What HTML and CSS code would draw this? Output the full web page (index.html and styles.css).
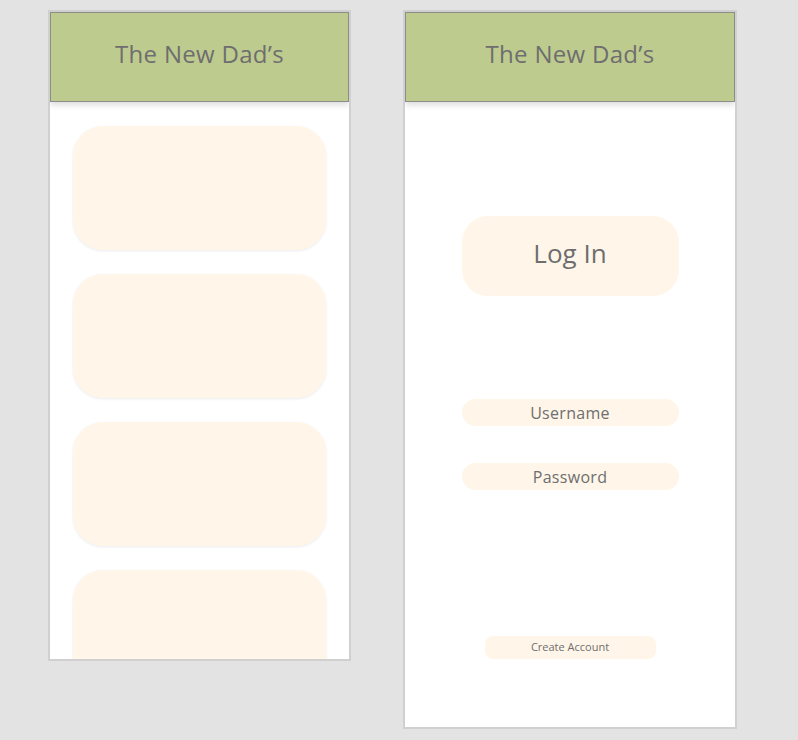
FILE: index.html
```html
<!DOCTYPE html>
<html>
<head>
<meta charset="utf-8">
<link rel="stylesheet" href="styles.css">
</head>
<body>
<div class="stage">
  <div class="phone phone-feed">
    <header class="bar"><span class="bar-title">The New Dad’s</span></header>
    <div class="feed">
      <div class="card"></div>
      <div class="card"></div>
      <div class="card"></div>
      <div class="card"></div>
    </div>
  </div>
  <div class="phone phone-login">
    <header class="bar"><span class="bar-title">The New Dad’s</span></header>
    <div class="login">
      <div class="login-btn">Log In</div>
      <div class="field field-user">Username</div>
      <div class="field field-pass">Password</div>
      <div class="create">Create Account</div>
    </div>
  </div>
</div>
</body>
</html>
```

FILE: styles.css
```css
html, body {
  margin: 0;
  padding: 0;
  background: #e3e3e3;
  height: 100%;
  overflow: hidden;
}
body {
  font-family: "Open Sans", "DejaVu Sans", sans-serif;
  color: #6e6e6e;
}
.stage {
  display: flex;
  align-items: flex-start;
  padding: 10px 0 0 48px;
  gap: 52px;
}
.phone {
  background: #fff;
  border: 2px solid #d0d0d0;
  display: flex;
  flex-direction: column;
  overflow: hidden;
  box-sizing: content-box;
}
.phone-feed {
  width: 299px;
  height: 647px;
}
.phone-login {
  width: 330px;
  height: 715px;
}
.bar {
  flex: 0 0 auto;
  height: 88px;
  background: #becb8e;
  border: 1px solid #8c8c88;
  display: flex;
  align-items: center;
  justify-content: center;
  position: relative;
  z-index: 1;
  box-shadow: 0 3px 6px rgba(0, 0, 0, 0.14);
}
.bar-title {
  font-size: 24px;
  line-height: 1;
  letter-spacing: 0.3px;
  color: #6e6e6e;
  margin-bottom: 6px;
}
.feed {
  display: flex;
  flex-direction: column;
  gap: 24px;
  padding: 24px 23px 0;
}
.card {
  flex: 0 0 auto;
  height: 124px;
  background: #fff6e9;
  border-radius: 30px;
  box-shadow: 0 1px 3px rgba(0, 0, 0, 0.08);
}
.login {
  display: flex;
  flex-direction: column;
  align-items: center;
}
.login-btn {
  margin-top: 114px;
  width: 217px;
  height: 80px;
  border-radius: 26px;
  background: #fff6e9;
  display: flex;
  align-items: center;
  justify-content: center;
  font-size: 26px;
  line-height: 1;
  padding-bottom: 6px;
  box-sizing: border-box;
  color: #6e6e6e;
}
.field {
  width: 217px;
  height: 27px;
  border-radius: 14px;
  background: #fff6e9;
  display: flex;
  align-items: center;
  justify-content: center;
  font-size: 16px;
  letter-spacing: 0.3px;
  color: #6e6e6e;
}
.field-user {
  margin-top: 103px;
}
.field-pass {
  margin-top: 37px;
}
.create {
  margin-top: 146px;
  width: 171px;
  height: 23px;
  border-radius: 8px;
  background: #fff6e9;
  display: flex;
  align-items: center;
  justify-content: center;
  font-size: 11px;
  line-height: 1;
  padding-bottom: 2px;
  box-sizing: border-box;
  color: #6e6e6e;
}
```
